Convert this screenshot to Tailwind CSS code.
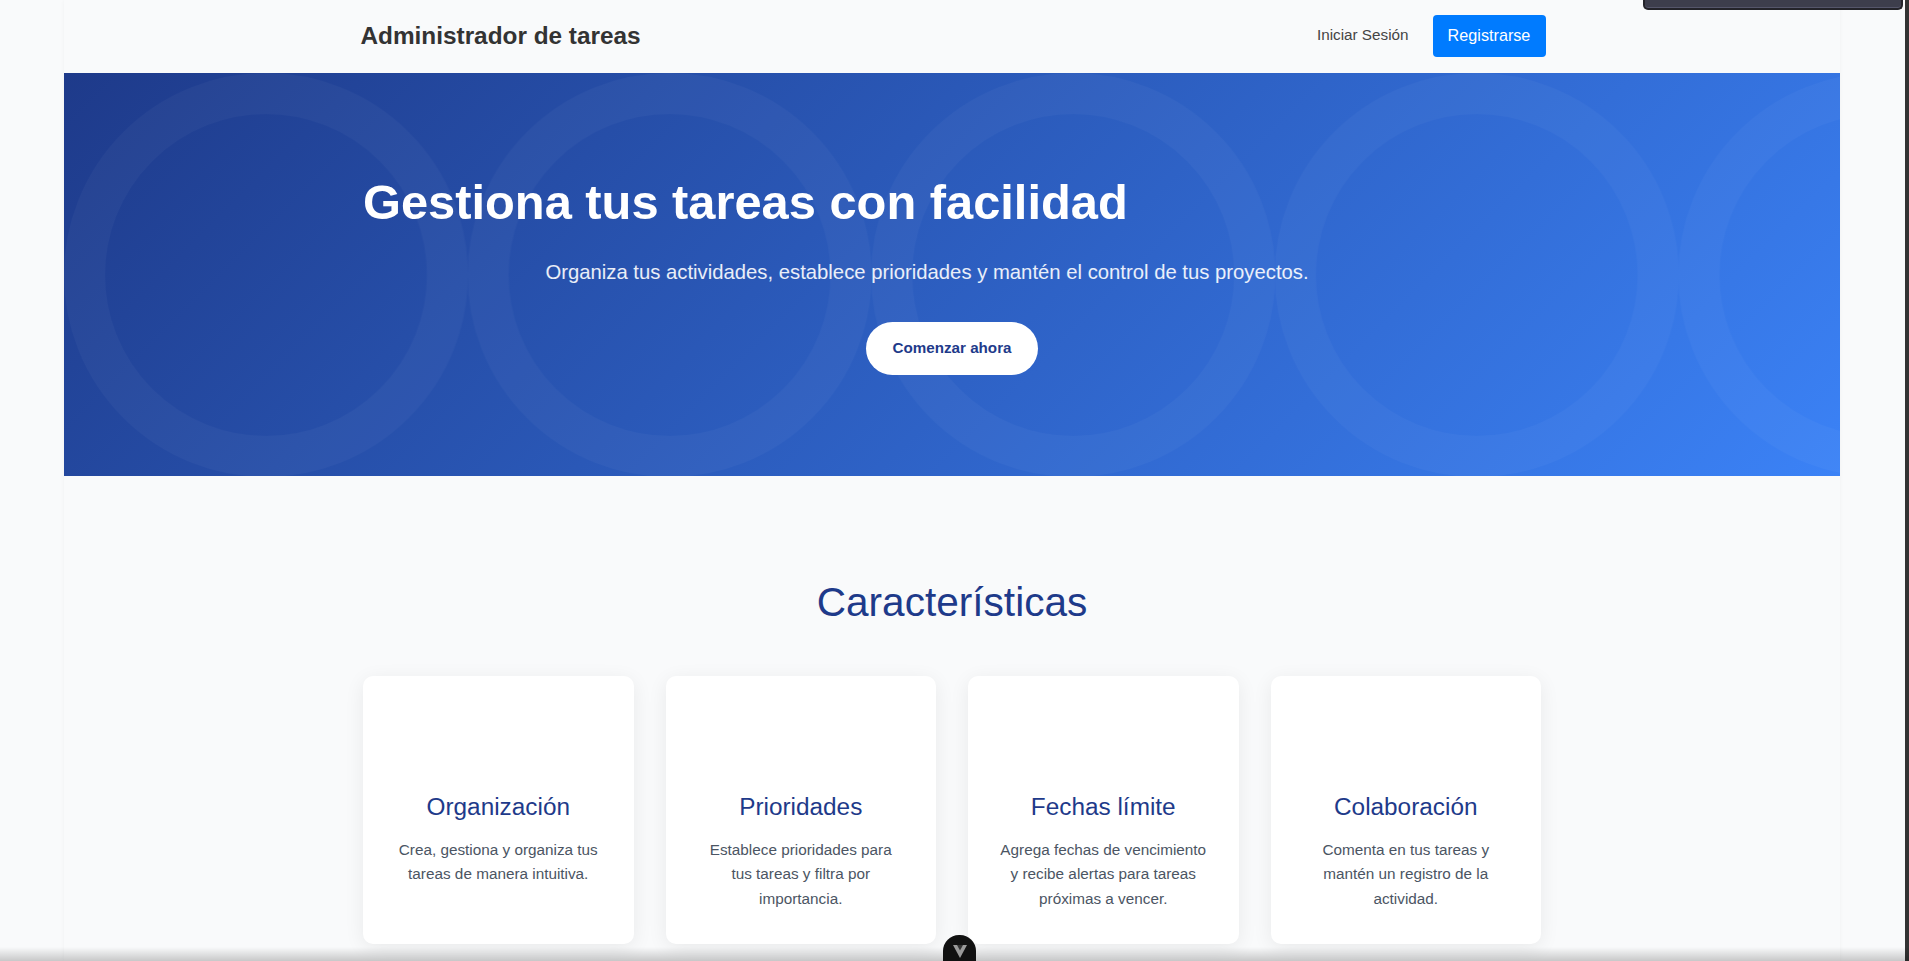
<!DOCTYPE html>
<html lang="es">
<head>
  <meta charset="UTF-8" />
  <title>Administrador de tareas</title>
  <script src="https://cdn.jsdelivr.net/npm/@tailwindcss/browser@4"></script>
</head>
<body class="relative h-screen overflow-hidden bg-[#f9fafb] font-['Liberation_Sans',Arial,sans-serif] text-[#333]">

  <div class="mx-16 w-[1776px] min-h-screen opacity-[.999] shadow-[0_0_4px_rgba(0,0,0,0.04)]">
    <!-- header -->
    <header class="h-[73px]">
      <div class="mx-auto flex h-full w-[1185px] translate-x-[1px] items-center justify-between pb-[1px]">
        <h1 class="text-[24.35px] font-bold text-[#333]">Administrador de tareas</h1>
        <nav class="flex items-center gap-6">
          <a href="#" class="text-[15.25px] text-[#444] -translate-y-[1px]">Iniciar Sesión</a>
          <a href="#" class="flex h-[42px] w-[113px] items-center justify-center rounded bg-[#007bff] pb-[1px] text-[16.2px] text-white">Registrarse</a>
        </nav>
      </div>
    </header>

    <!-- hero -->
    <section class="relative h-[403px] overflow-hidden bg-[linear-gradient(135deg,#1e3a8a,#3b82f6)] text-white">
      <svg class="absolute inset-0 h-full w-full" aria-hidden="true">
        <defs>
          <pattern id="rings" width="403.6" height="404" patternUnits="userSpaceOnUse">
            <circle cx="202" cy="202" r="181.5" fill="none" stroke="white" stroke-opacity="0.03" stroke-width="41" />
          </pattern>
        </defs>
        <rect width="100%" height="100%" fill="url(#rings)" />
      </svg>
      <div class="relative mx-auto flex w-[1178px] flex-col pt-[101px]">
        <h2 class="text-[48.8px] leading-[56px] font-bold">Gestiona tus tareas con facilidad</h2>
        <p class="mt-[26px] w-[1128px] text-center text-[20.3px] leading-[32px] text-white/90">Organiza tus actividades, establece prioridades y mantén el control de tus proyectos.</p>
        <a href="#" class="mt-[34px] flex h-[53px] w-[172px] items-center justify-center self-center rounded-full bg-white text-[15.2px] font-bold text-[#1e3a8a]">Comenzar ahora</a>
      </div>
    </section>

    <!-- features -->
    <section class="pt-[102px]">
      <h2 class="text-center text-[40.6px] leading-[48px] text-[#1e3a8a]">Características</h2>
      <div class="mx-auto mt-[50px] grid w-[1178px] grid-cols-4 gap-8">
        <div class="h-[268px] rounded-[10px] bg-white px-6 pt-[113px] text-center shadow-[0_4px_20px_rgba(0,0,0,0.07)]">
          <h3 class="text-[24.35px] leading-[36px] text-[#1e3a8a]">Organización</h3>
          <p class="mt-[13px] text-[15.3px] leading-[24.32px] text-[#4b5563]">Crea, gestiona y organiza tus<br />tareas de manera intuitiva.</p>
        </div>
        <div class="h-[268px] rounded-[10px] bg-white px-6 pt-[113px] text-center shadow-[0_4px_20px_rgba(0,0,0,0.07)]">
          <h3 class="text-[24.35px] leading-[36px] text-[#1e3a8a]">Prioridades</h3>
          <p class="mt-[13px] text-[15.3px] leading-[24.32px] text-[#4b5563]">Establece prioridades para<br />tus tareas y filtra por<br />importancia.</p>
        </div>
        <div class="h-[268px] rounded-[10px] bg-white px-6 pt-[113px] text-center shadow-[0_4px_20px_rgba(0,0,0,0.07)]">
          <h3 class="text-[24.35px] leading-[36px] text-[#1e3a8a]">Fechas límite</h3>
          <p class="mt-[13px] text-[15.3px] leading-[24.32px] text-[#4b5563]">Agrega fechas de vencimiento<br />y recibe alertas para tareas<br />próximas a vencer.</p>
        </div>
        <div class="h-[268px] rounded-[10px] bg-white px-6 pt-[113px] text-center shadow-[0_4px_20px_rgba(0,0,0,0.07)]">
          <h3 class="text-[24.35px] leading-[36px] text-[#1e3a8a]">Colaboración</h3>
          <p class="mt-[13px] text-[15.3px] leading-[24.32px] text-[#4b5563]">Comenta en tus tareas y<br />mantén un registro de la<br />actividad.</p>
        </div>
      </div>
    </section>
  </div>

  <!-- overlays from the browser: devtools pieces -->
  <div class="absolute top-0 right-[6px] h-[10px] w-[260px] rounded-b-[5px] border-2 border-t-0 border-[#24242a] bg-[#3d3e4c] shadow-[inset_0_-1px_0_#55566a]"></div>
  <div class="absolute top-0 right-0 h-full w-1 bg-[#333]"></div>
  <div class="absolute right-0 bottom-0 left-0 h-[14px] bg-gradient-to-b from-transparent to-black/20"></div>
  <div class="absolute bottom-0 left-[943px] flex h-[26px] w-[33px] items-start justify-center rounded-t-[16px] bg-[#111] pt-[10px]">
    <svg width="14" height="13" viewBox="0 0 14 13"><path d="M0 0h14L7 13z" fill="#9a9a9a" /><path d="M4 0h6L7 5.5z" fill="#333" /></svg>
  </div>
</body>
</html>
